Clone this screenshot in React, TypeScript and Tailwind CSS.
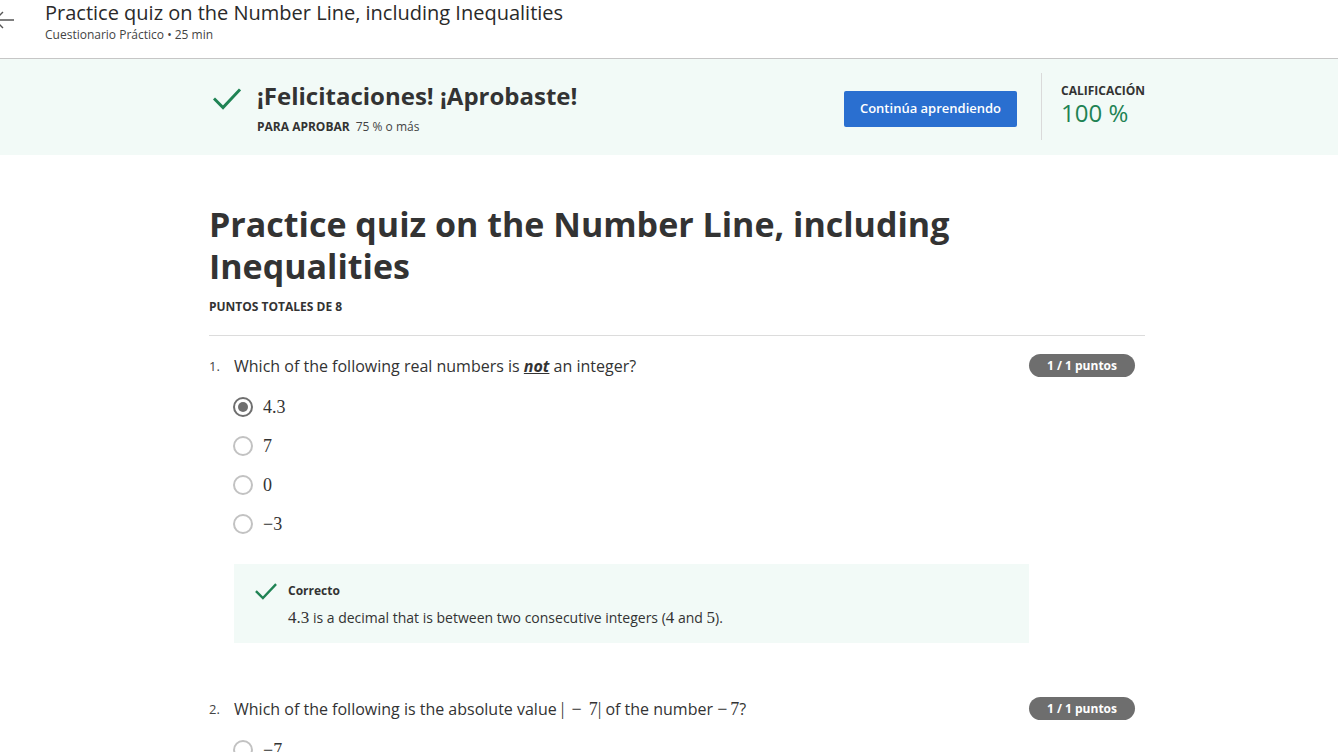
import React from "react";

const sans = "font-['Open_Sans',sans-serif]";
const serif = "font-['Liberation_Serif',serif]";

function Check({ className }: { className?: string }) {
  return (
    <svg viewBox="0 0 28 22" className={className} fill="none">
      <path d="M2 11.5 L10 19.5 L26 2.5" stroke="#1f8354" strokeWidth="3" strokeLinecap="square" />
    </svg>
  );
}

function Radio({ checked }: { checked?: boolean }) {
  return (
    <span
      className={`flex h-5 w-5 shrink-0 items-center justify-center rounded-full border-2 ${
        checked ? "border-[#6f6f6f]" : "border-[#c2c2c2]"
      }`}
    >
      {checked && <span className="h-[10px] w-[10px] rounded-full bg-[#6f6f6f]" />}
    </span>
  );
}

function Badge() {
  return (
    <span className="flex h-[23px] w-[106px] items-center justify-center rounded-full bg-[#6e6e6e] text-[12px] font-bold text-white">
      1 / 1 puntos
    </span>
  );
}

const options = ["4.3", "7", "0", "\u22123"];

export default function App() {
  return (
    <div className={`${sans} min-h-screen bg-white text-[#333]`}>
      {/* Header */}
      <div className="flex h-[59px] border-b border-[#c6c6c6]">
        <div className="w-[45px] overflow-hidden pt-[10px]">
          <svg viewBox="0 0 20 20" className="-ml-[6px] h-5 w-5" fill="none">
            <path d="M1 10 H20 M1 10 L9 2 M1 10 L9 18" stroke="#555" strokeWidth="1.4" />
          </svg>
        </div>
        <div>
          <div className="text-[20px] leading-[26px] text-[#2a2a2a]">
            Practice quiz on the Number Line, including Inequalities
          </div>
          <div className="mt-[1px] text-[12px] leading-[16px] text-[#444]">
            Cuestionario Práctico • 25 min
          </div>
        </div>
      </div>

      {/* Banner */}
      <div className="flex h-[96px] bg-[#f2faf7] pl-[213px]">
        <div className="flex w-[608px] pt-[25px]">
          <Check className="mt-[4px] h-[22px] w-[28px]" />
          <div className="ml-4">
            <div className="text-[24px] font-bold leading-[24px] text-[#333]">
              ¡Felicitaciones! ¡Aprobaste!
            </div>
            <div className="mt-[11px] text-[12px] leading-[16px]">
              <span className="font-bold">PARA APROBAR</span>
              <span className="ml-[6px] text-[#444]">75 % o más</span>
            </div>
          </div>
        </div>
        <div className="ml-[23px] pt-[32px]">
          <button className="h-[36px] w-[173px] rounded-[2px] bg-[#2a6fd0] text-[13px] font-semibold text-white">
            Continúa aprendiendo
          </button>
        </div>
        <div className="ml-[24px] mt-[14px] h-[67px] w-px bg-[#dadada]" />
        <div className="ml-[19px] pt-[24px]">
          <div className="text-[12px] font-bold leading-[16px] text-[#333]">CALIFICACIÓN</div>
          <div className="text-[24px] leading-[28px] text-[#1f8354]">100 %</div>
        </div>
      </div>

      {/* Main */}
      <div className="ml-[209px] w-[936px] pt-[48px]">
        <h1 className="text-[34px] font-bold leading-[42px] text-[#333]">
          Practice quiz on the Number Line, including
          <br />
          Inequalities
        </h1>
        <div className="mt-[12px] text-[12px] font-bold leading-[16px]">PUNTOS TOTALES DE 8</div>
        <div className="mt-[20px] h-px bg-[#dcdcdc]" />

        {/* Q1 */}
        <div className="mt-[18px] flex items-start pr-[10px]">
          <div className="flex flex-1 items-center">
            <span className="w-[25px] text-[13px] leading-[24px] text-[#444]">1.</span>
            <span className="text-[16px] leading-[24px] text-[#333]">
              Which of the following real numbers is{" "}
              <span className="font-bold italic underline">not</span> an integer?
            </span>
          </div>
          <Badge />
        </div>
        <div className="ml-[24px] mt-[17px] flex flex-col gap-[15px]">
          {options.map((o, i) => (
            <div key={o} className="flex h-[24px] items-center">
              <Radio checked={i === 0} />
              <span className={`${serif} ml-[10px] text-[18px] text-[#333]`}>{o}</span>
            </div>
          ))}
        </div>

        <div className="ml-[25px] mt-[28px] flex h-[79px] w-[795px] bg-[#f2faf7] pl-[21px] pt-[19px]">
          <Check className="h-[17px] w-[22px]" />
          <div className="ml-[11px]">
            <div className="text-[12px] font-bold leading-[16px] text-[#333]">Correcto</div>
            <div className="mt-[9px] text-[14px] leading-[20px] text-[#333]">
              <span className={`${serif} text-[17px]`}>4.3</span> is a decimal that is between two
              consecutive integers (<span className={`${serif} text-[17px]`}>4</span> and{" "}
              <span className={`${serif} text-[17px]`}>5</span>).
            </div>
          </div>
        </div>

        {/* Q2 */}
        <div className="mt-[54px] flex items-start pr-[10px]">
          <div className="flex flex-1 items-center">
            <span className="w-[25px] text-[13px] leading-[24px] text-[#444]">2.</span>
            <span className="text-[16px] leading-[24px] text-[#333]">
              Which of the following is the absolute value{" "}
              <span className={`${serif} text-[18px]`}>
                |<span className="mx-[7px]">−</span>7|
              </span>{" "}
              of the number{" "}
              <span className={`${serif} text-[18px]`}>
                <span className="mr-[3px]">−</span>7
              </span>
              ?
            </span>
          </div>
          <Badge />
        </div>
        <div className="ml-[24px] mt-[17px] flex flex-col gap-[15px]">
          <div className="flex h-[24px] items-center">
            <Radio />
            <span className={`${serif} ml-[10px] text-[18px] text-[#333]`}>−7</span>
          </div>
        </div>
      </div>
    </div>
  );
}
